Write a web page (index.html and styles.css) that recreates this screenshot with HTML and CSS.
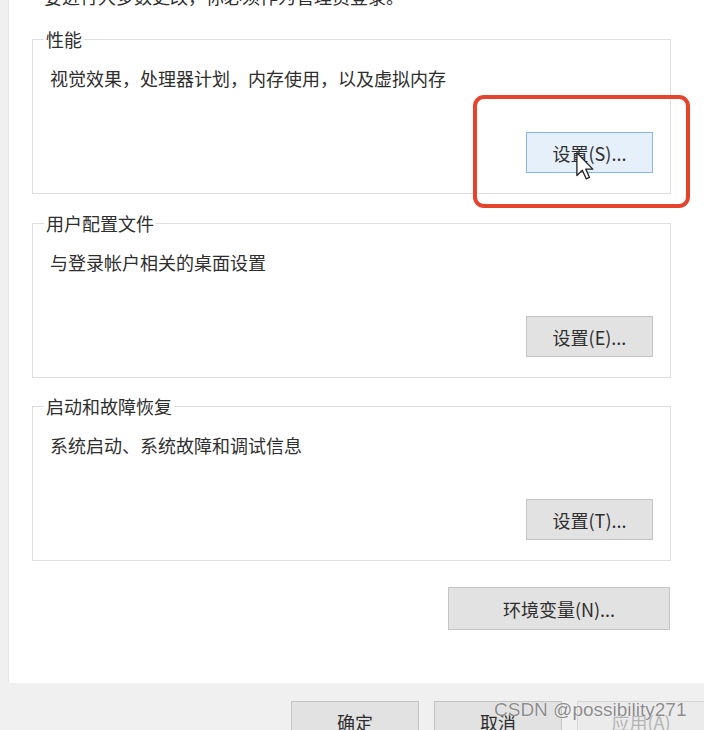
FILE: index.html
```html
<!DOCTYPE html>
<html lang="zh-CN">
<head>
  <meta charset="UTF-8">
  <meta name="viewport" content="width=device-width, initial-scale=1.0">
  <title>系统属性 - 高级</title>
  <link rel="stylesheet" href="styles.css">
</head>
<body>

  <div class="panel">
    <p class="note">要进行大多数更改，你必须作为管理员登录。</p>

    <fieldset class="group group-first">
      <legend>性能</legend>
      <p class="desc">视觉效果，处理器计划，内存使用，以及虚拟内存</p>
      <div class="actions">
        <button class="btn btn-hover">设置(S)...</button>
      </div>
    </fieldset>

    <fieldset class="group">
      <legend>用户配置文件</legend>
      <p class="desc">与登录帐户相关的桌面设置</p>
      <div class="actions">
        <button class="btn">设置(E)...</button>
      </div>
    </fieldset>

    <fieldset class="group group-last">
      <legend>启动和故障恢复</legend>
      <p class="desc">系统启动、系统故障和调试信息</p>
      <div class="actions">
        <button class="btn">设置(T)...</button>
      </div>
    </fieldset>

    <div class="actions env">
      <button class="btn btn-wide">环境变量(N)...</button>
    </div>
  </div>

  <div class="footer">
    <button class="btn btn-footer">确定</button>
    <button class="btn btn-footer">取消</button>
    <button class="btn btn-footer" disabled>应用(A)</button>
  </div>

  <!-- annotation on top of the screenshot -->
  <div class="highlight"></div>

  <svg class="cursor" width="18" height="28" viewBox="0 0 12 19">
    <path d="M0.5 0.5 L0.5 16 L4.2 12.4 L6.8 18.2 L9 17.2 L6.5 11.6 L11.3 11.6 Z" fill="#fff" stroke="#222" stroke-width="0.9" stroke-linejoin="round"/>
  </svg>

  <div class="watermark">CSDN @possibility271</div>

</body>
</html>
```

FILE: styles.css
```css
body {
  margin: 0;
  padding: 0;
  width: 704px;
  height: 730px;
  overflow: hidden;
  position: relative;
  background-color: #f0f0f0;
  font-family: "Noto Sans CJK SC", "Microsoft YaHei", sans-serif;
  font-size: 18px;
  color: #2e2e2e;
}

.panel {
  margin-left: 8px;
  height: 683px;
  padding: 0 33px 0 23px;
  background-color: #fff;
  border-left: 1px solid #e6e6e6;
  box-sizing: border-box;
  overflow: hidden;
}

.note {
  margin: -16px 0 0;
  padding-left: 12px;
  line-height: 24px;
  white-space: nowrap;
}

.group {
  margin: 18px 0 0;
  padding: 0 17px 20px;
  border: 1px solid #dedede;
  min-inline-size: 0;
}

.group-first {
  margin-top: 21px;
}

.group:nth-of-type(2) {
  margin-top: 19px;
}

.group legend {
  margin-left: -6px;
  padding: 0 2px;
  line-height: 20px;
}

.desc {
  margin: 17px 0 0;
  line-height: 24px;
}

.actions {
  display: flex;
  justify-content: flex-end;
  margin-top: 42px;
}

.btn {
  width: 127px;
  height: 41px;
  padding: 0;
  font: inherit;
  color: #2e2e2e;
  background-color: #e2e2e2;
  border: 1px solid #c4c4c4;
  box-sizing: border-box;
  display: flex;
  align-items: center;
  justify-content: center;
}

.btn-hover {
  background-color: #e6f0fb;
  border-color: #86b5e8;
}

.env {
  margin-top: 26px;
  margin-right: 1px;
}

.btn-wide {
  width: 222px;
  height: 43px;
}

.footer {
  display: flex;
  justify-content: flex-end;
  gap: 15px;
  padding-top: 18px;
  margin-right: -1px;
}

.btn-footer {
  width: 128px;
  height: 42px;
}

.btn-footer:disabled {
  color: #b4b4b4;
  background-color: #ebebeb;
  border-color: #d6d6d6;
}

.highlight {
  position: absolute;
  left: 473px;
  top: 95px;
  width: 217px;
  height: 113px;
  border: 4px solid #e6432d;
  border-radius: 11px;
  box-sizing: border-box;
}

.cursor {
  position: absolute;
  left: 576px;
  top: 152px;
}

.watermark {
  position: absolute;
  left: 494px;
  top: 699px;
  font-family: "Liberation Sans", Arial, sans-serif;
  font-size: 19px;
  line-height: 22px;
  color: #8c8c8c;
  text-shadow: 0 0 1px #fff, 0 0 1px #fff;
  white-space: nowrap;
}
```
